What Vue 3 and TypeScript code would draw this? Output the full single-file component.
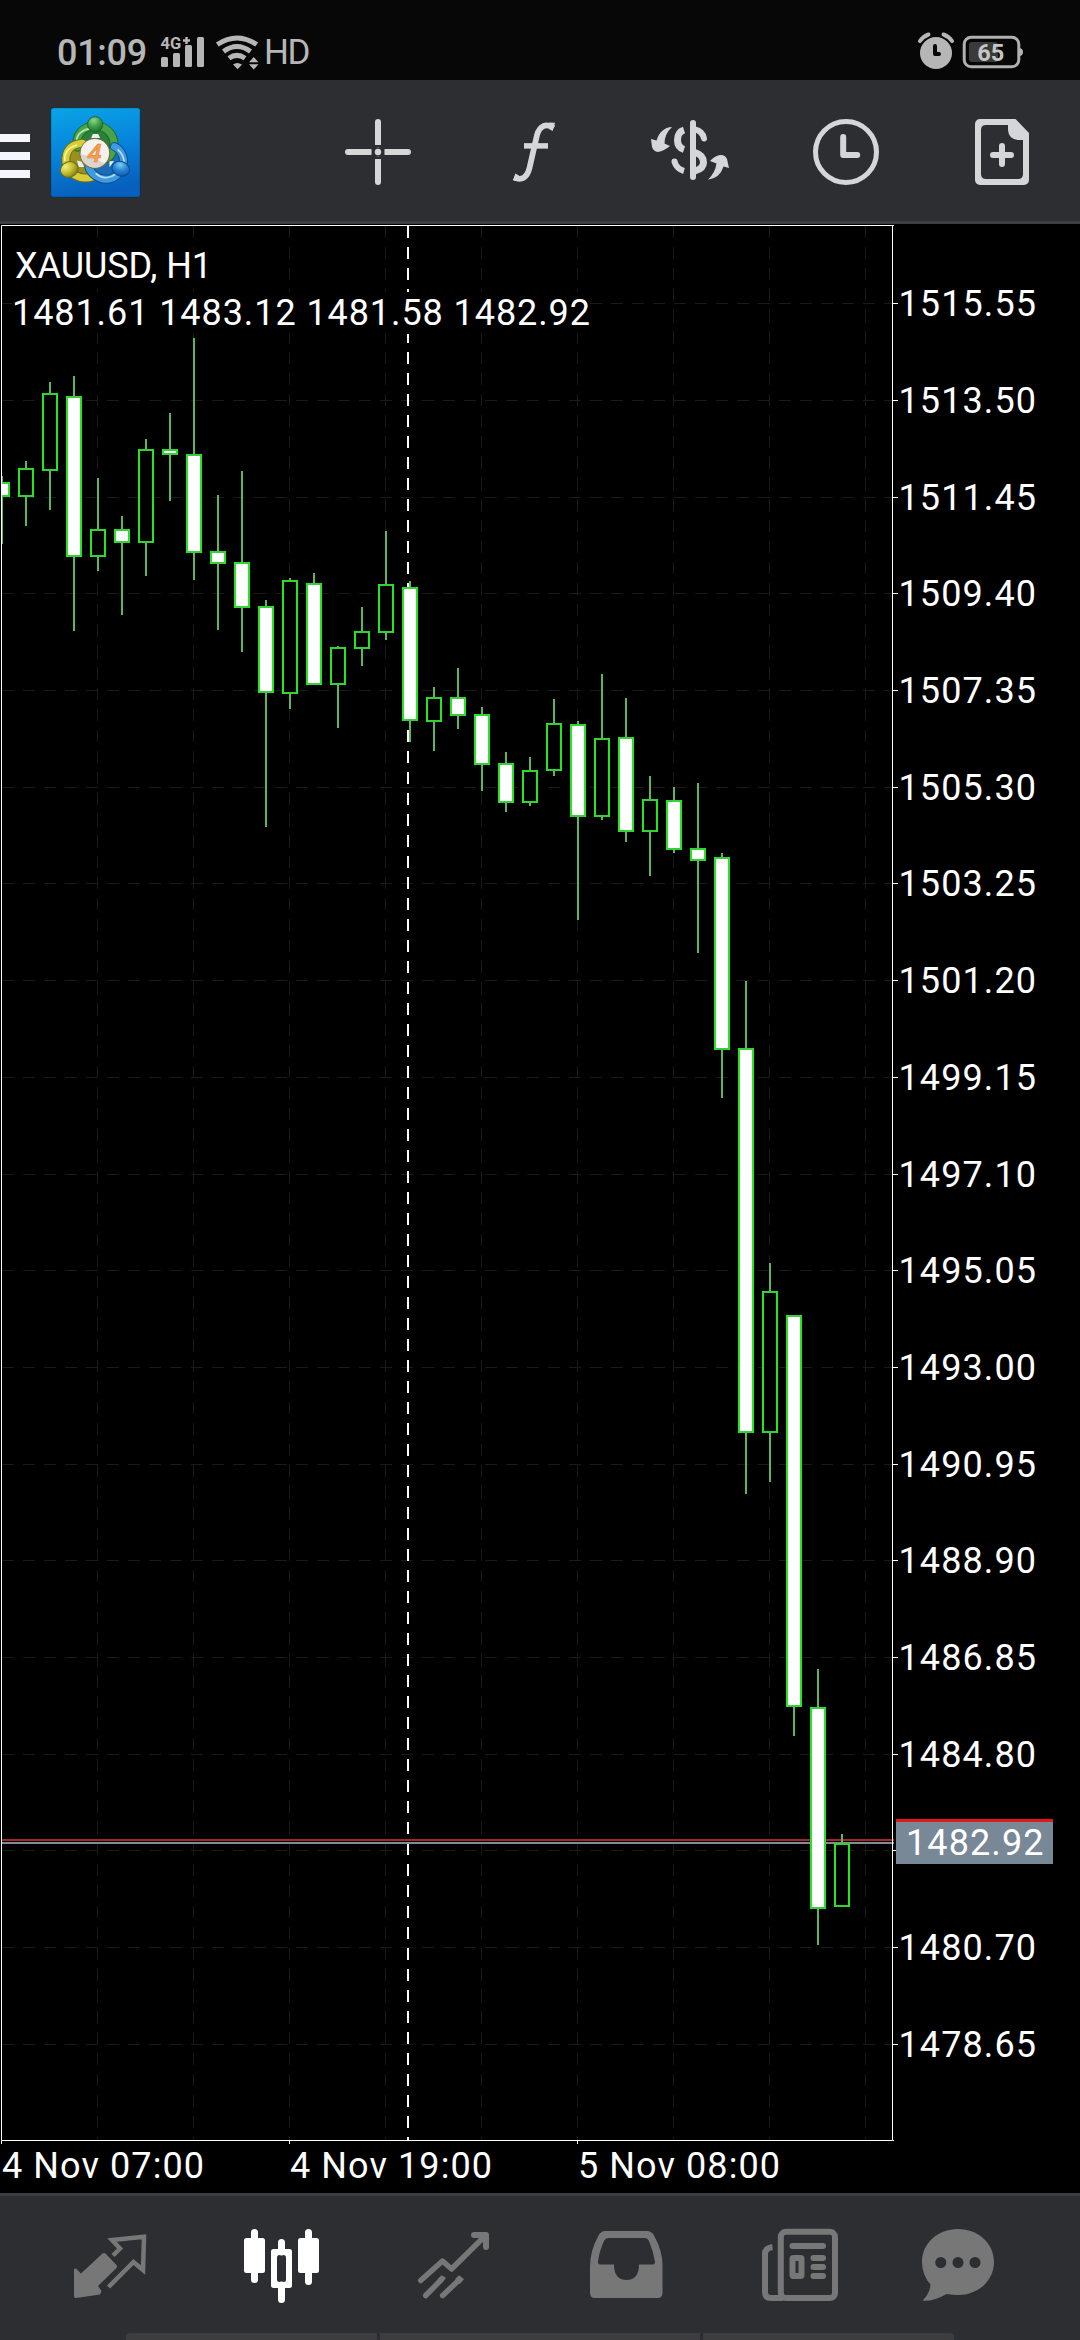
<script setup lang="ts">
interface Candle {
  x: number
  high: number
  top: number
  bottom: number
  low: number
  bear: boolean
}

// high, body top, body bottom, low, bearish flag
const raw: [number, number, number, number, number][] = [
  [476, 482, 497, 544, 1],
  [461, 468, 497, 526, 0],
  [382, 393, 471, 510, 0],
  [376, 396, 557, 631, 1],
  [478, 529, 557, 571, 0],
  [516, 529, 543, 615, 1],
  [439, 449, 543, 576, 0],
  [413, 449, 455, 501, 1],
  [338, 454, 553, 580, 1],
  [495, 551, 564, 630, 1],
  [471, 562, 608, 652, 1],
  [600, 606, 693, 827, 1],
  [578, 580, 694, 709, 0],
  [573, 583, 685, 685, 1],
  [646, 647, 685, 728, 0],
  [607, 631, 649, 666, 0],
  [531, 584, 633, 640, 0],
  [581, 587, 721, 742, 1],
  [687, 697, 722, 751, 0],
  [668, 697, 716, 729, 1],
  [707, 714, 765, 791, 1],
  [752, 763, 803, 812, 1],
  [757, 770, 803, 806, 0],
  [699, 723, 771, 776, 0],
  [721, 724, 817, 920, 1],
  [674, 738, 817, 820, 0],
  [698, 737, 832, 842, 1],
  [776, 799, 832, 876, 0],
  [787, 800, 850, 853, 1],
  [783, 848, 861, 953, 1],
  [853, 857, 1050, 1098, 1],
  [981, 1048, 1433, 1494, 1],
  [1263, 1291, 1433, 1482, 0],
  [1315, 1315, 1707, 1736, 1],
  [1669, 1707, 1909, 1945, 1],
  [1834, 1843, 1907, 1907, 0],
]

const candles: Candle[] = raw.map(([high, top, bottom, low, bear], i) => ({
  x: 2 + i * 24,
  high,
  top,
  bottom,
  low,
  bear: bear === 1,
}))

const gridX: number[] = Array.from({ length: 9 }, (_, i) => 97 + i * 96)
const gridY: number[] = [
  303, 400, 497, 593, 690, 787, 883, 980, 1077, 1174, 1270, 1367, 1464, 1560, 1657, 1754, 1850, 1947, 2044,
]
const prices = gridY
  .map((y, i) => ({ y, label: (1515.55 - i * 2.05).toFixed(2) }))
  .filter((p) => p.y !== 1850)

const dates = [
  { x: 1, label: '4 Nov 07:00' },
  { x: 289, label: '4 Nov 19:00' },
  { x: 577, label: '5 Nov 08:00' },
]
</script>

<template>
  <div class="screen">
    <header class="status">
      <span class="clock">01:09</span>
      <svg class="signal" viewBox="160 34 46 36" width="46" height="36">
        <text x="160.5" y="49" class="net">4G</text>
        <path d="M183 40.5h7M186.500 37v7" class="plus" />
        <path d="M161 58.500a1.500 1.500 0 0 1 1.500-1.500h4a1.500 1.500 0 0 1 1.500 1.500V65.500a1.500 1.500 0 0 1-1.500 1.500h-4a1.500 1.500 0 0 1-1.500-1.500z" />
        <rect x="173" y="53" width="7" height="14" rx="1.500" />
        <rect x="185" y="45" width="7" height="22" rx="1.500" />
        <rect x="197" y="37" width="7" height="30" rx="1.500" />
      </svg>
      <svg class="wifi" viewBox="215 34 45 36" width="45" height="36">
        <path d="M217.300 44.500Q237 31.500 256.700 44.500M223.500 51.500Q237 41.500 250.500 51.500M229 58.300Q237 52.500 245 58.300" />
        <path class="fill" d="M233 64.500Q237 61.500 242 64.500L237.600 69.300z" />
        <path class="fill" d="M249 62.200h9.500L253.700 57zM249 64.200h9.500L253.700 69.500z" />
      </svg>
      <span class="hd">HD</span>
      <svg class="alarm" viewBox="916 31 40 40" width="40" height="40">
        <circle cx="936" cy="53" r="16" />
        <path class="ear" d="M920 41Q923 36.500 928.500 34.500M952 41Q949 36.500 943.500 34.500" />
        <path class="hands" d="M935 46v8h4" />
      </svg>
      <svg class="battery" viewBox="962 34 62 36" width="62" height="36">
        <rect x="964.200" y="37.200" width="54.600" height="29.600" rx="7" class="case" />
        <rect x="969" y="42" width="29" height="20" rx="3" class="charge" />
        <path d="M1020 48q3 1 3 4t-3 4z" class="tip" />
        <text x="990.800" y="60.700" class="level">65</text>
      </svg>
    </header>

    <nav class="toolbar">
      <svg class="burger" viewBox="0 0 30 90" width="30" height="90">
        <path d="M0 25h30v8H0zM0 43h30v8H0zM0 61h30v8H0z" />
      </svg>
      <svg class="logo" viewBox="151 319 274 274" width="91" height="91">
        <defs>
          <linearGradient id="sky" x1="0" y1="0" x2="0.2" y2="1">
            <stop offset="0" stop-color="#0aa5e6" />
            <stop offset="0.500" stop-color="#0785dc" />
            <stop offset="1" stop-color="#0760bd" />
          </linearGradient>
          <radialGradient id="green" cx="0.400" cy="0.250" r="0.800">
            <stop offset="0" stop-color="#8fd58e" />
            <stop offset="0.500" stop-color="#3fa048" />
            <stop offset="1" stop-color="#1a722c" />
          </radialGradient>
          <radialGradient id="yellow" cx="0.350" cy="0.250" r="0.800">
            <stop offset="0" stop-color="#f2ef80" />
            <stop offset="0.500" stop-color="#c9c032" />
            <stop offset="1" stop-color="#807d16" />
          </radialGradient>
          <radialGradient id="blue" cx="0.400" cy="0.250" r="0.800">
            <stop offset="0" stop-color="#7fc9f6" />
            <stop offset="0.500" stop-color="#2885d4" />
            <stop offset="1" stop-color="#0a55a5" />
          </radialGradient>
        </defs>
        <rect x="153" y="321" width="270" height="270" rx="8" fill="url(#sky)" stroke="#13303f" stroke-width="3" />
        <path d="M234 440C226 404 248 378 288 375C330 378 350 415 342 444L322 474L250 470z" fill="#2c7f39" />
        <path d="M248 428C215 430 196 450 199 486C207 520 238 540 278 530L290 480z" fill="#99901f" />
        <path d="M345 438C370 450 380 480 366 506C350 538 315 545 288 526L268 500z" fill="#1c6cb8" />
        <g fill="none" stroke-linecap="round">
          <path d="M234 440C226 404 248 378 288 375C330 378 350 415 342 444C338 458 330 470 322 474" stroke="#1c6a2a" stroke-width="27" />
          <path d="M234 440C226 404 248 378 288 375C330 378 350 415 342 444C338 458 330 470 322 474" stroke="#4ba349" stroke-width="21" />
          <path d="M231 420C232 400 250 386 272 384" stroke="#b9e7aa" stroke-width="5" />
          <path d="M248 428C215 430 196 450 199 486C207 520 238 540 278 530" stroke="#6d6d18" stroke-width="27" />
          <path d="M248 428C215 430 196 450 199 486C207 520 238 540 278 530" stroke="#d8cd38" stroke-width="21" />
          <path d="M230 434C205 442 193 458 196 480" stroke="#f8f59b" stroke-width="5" />
          <path d="M345 438C370 450 380 480 366 506C350 538 315 545 288 526C276 518 270 508 268 500" stroke="#0c4f91" stroke-width="27" />
          <path d="M345 438C370 450 380 480 366 506C350 538 315 545 288 526C276 518 270 508 268 500" stroke="#3f9be0" stroke-width="21" />
          <path d="M290 520C308 535 330 535 348 522M356 448Q372 462 374 482" stroke="#b7e0f8" stroke-width="5" />
        </g>
        <path d="M275 412L280 400H296L302 412zM238 500L232 480L246 484L254 500zM330 500L344 482L330 482z" fill="#e8f2f2" />
        <circle cx="287" cy="371" r="23" fill="url(#green)" stroke="#1b652b" stroke-width="3" />
        <ellipse cx="209" cy="507" rx="27" ry="23" transform="rotate(-20 209 507)" fill="url(#yellow)" stroke="#6a6b1b" stroke-width="3" />
        <ellipse cx="364" cy="505" rx="27" ry="22" transform="rotate(20 364 505)" fill="url(#blue)" stroke="#0d4a8c" stroke-width="3" />
        <circle cx="286" cy="459" r="46" fill="#7d6b34" />
        <circle cx="286" cy="458" r="43" fill="#f2f1ee" />
        <path d="M243 461A43 43 0 0 0 315 490L284 470z" fill="#d9d6d1" />
        <text x="285" y="486" class="four">4</text>
      </svg>

      <div class="tools">
        <svg viewBox="330 104 96 96" class="tool">
          <path class="line" stroke-width="6" d="M348 152h22.500M408 152h-22.500" />
          <path class="line" stroke-width="6" d="M378 122v22.500M378 182v-22.500" />
          <path class="gap" d="M372.800 148v8M383.200 148v8M374 146.300h8M374 157.700h8" />
          <circle cx="378" cy="152" r="3.200" />
        </svg>
        <svg viewBox="486 104 96 96" class="tool">
          <path class="open" stroke-width="5.700" d="M553.600 128C546 122.500 539.500 126 537 135L529.500 168C527 178 521.500 180.800 514 177.500" />
          <path class="open" stroke-width="5.500" d="M524 145.900h24" />
          <path d="M555 122.800L552.700 131L549 129V122.500zM513.200 180.500L515.300 173.500L519 175.500V181z" />
        </svg>
        <svg viewBox="642 104 96 96" class="tool">
          <path class="line" stroke-width="6" d="M693 123v54" />
          <path class="open" stroke-width="7" d="M684 130Q677.500 132 677.500 140Q677.500 147.500 684 149.500" />
          <path class="line" stroke-width="6" d="M695 129.500Q702.500 131 704 138.500" />
          <path class="open" stroke-width="7" d="M695 152.500Q703.500 155 703.500 162.500Q703.500 168.500 695 171" />
          <path class="open" stroke-width="6" d="M674.500 162Q677 169 684 171" />
          <circle cx="674.500" cy="161.500" r="3" />
          <path d="M672 127Q660.500 127.500 656.500 140.500L651 139L652 147Q653.500 151.500 658 152Q664 151 670 146L664.500 143.500Q664.500 134 672 127z" />
          <path d="M708 179.800Q720 178 723.500 166.500L729 168L727 159Q725 154.500 720 155Q714.500 156 710 161L716.500 163.500Q715.500 172 708 179.800z" />
        </svg>
        <svg viewBox="798 104 96 96" class="tool">
          <circle cx="846" cy="152" r="30.500" fill="none" stroke="#d5d6d8" stroke-width="5" />
          <path class="line" stroke-width="6" d="M843.200 137v18h14" />
        </svg>
        <svg viewBox="954 104 96 96" class="tool">
          <path fill-rule="evenodd" d="M980 119h35.500L1029 133v47a5 5 0 0 1-5 5h-44a5 5 0 0 1-5-5v-56a5 5 0 0 1 5-5zM986 125q-5 0-5 5v44q0 5 5 5h32q5 0 5-5v-34h-5q-9.500-1-10-10v-5z" />
          <path class="line" stroke-width="6" d="M1002 146v18M993 155h18" />
        </svg>
      </div>
    </nav>

    <main class="chart">
      <svg viewBox="0 224 1080 1969" width="1080" height="1969">
        <defs>
          <clipPath id="plot"><rect x="2" y="226" width="890" height="1914" /></clipPath>
        </defs>
        <g class="grid">
          <path v-for="y in gridY" :key="'h' + y" :d="`M2 ${y + 0.5}H892`" />
          <path v-for="x in gridX" :key="'v' + x" :d="`M${x + 0.5} 226V2140`" />
        </g>
        <path d="M408 226V2140" class="session" />
        <path d="M2 1840H894" stroke="#a62626" stroke-width="2" />
        <path d="M2 1843H894" stroke="#838a9b" stroke-width="2" />
        <g clip-path="url(#plot)">
          <g v-for="c in candles" :key="c.x">
            <path class="wick" :d="`M${c.x} ${c.high}V${c.low}`" />
            <rect
              :class="['body', { bear: c.bear }]"
              :x="c.x - 7"
              :y="c.top + 1"
              width="14"
              :height="c.bottom - c.top - 2"
            />
            <path class="cap" :d="`M${c.x - 6} ${c.top + 1}h12M${c.x - 6} ${c.bottom - 1}h12`" />
          </g>
        </g>
        <rect x="14" y="249" width="196" height="40" />
        <rect x="12" y="292" width="578" height="42" />
        <path class="frame" d="M1.500 2144V225.500H894M892.500 225V2140.500H1M289.500 2141v3M577.500 2141v3M893 2140.500h1" />
        <path v-for="y in gridY" :key="'t' + y" class="frame" :d="`M893 ${y + 0.5}h5`" />

        <text x="15" y="278" class="label" textLength="197">XAUUSD, H1</text>
        <text x="12" y="325" class="label" textLength="578">1481.61 1483.12 1481.58 1482.92</text>
        <text v-for="p in prices" :key="p.label" x="898.500" :y="p.y + 13" class="label" textLength="137.500">{{ p.label }}</text>
        <rect x="896" y="1819" width="157" height="45" class="tag" />
        <rect x="896" y="1819" width="157" height="3" class="tagline" />
        <text x="906" y="1855" class="label" textLength="137.500">1482.92</text>
        <text v-for="d in dates" :key="d.label" :x="d.x + 1" y="2178" class="label" textLength="202">{{ d.label }}</text>
      </svg>
    </main>

    <footer class="bottom">
      <div class="tabs">
        <svg viewBox="50 2199 120 134" class="tab">
          <path d="M102.500 2253.500q1.500-1.200 3 0l11 11.500q1 1.500 0 3L98 2286l3.500 5-1.500 3.500L76 2298q-2 0-2-2V2269l2-.5 5 5z" />
          <path class="open" stroke-width="4.500" d="M113 2255.500L120 2248.500L112 2240L144 2236.700L143 2270L133.500 2262L108.500 2287" />
        </svg>
        <svg viewBox="222 2199 120 134" class="tab active">
          <path class="line" stroke-width="7" d="M254.500 2232.500V2279.500M308.500 2232.500V2281.500M281.500 2242.500V2252M281.500 2285V2299.500" />
          <rect x="244" y="2238" width="21" height="35" rx="2.500" />
          <rect x="298" y="2238" width="21" height="35" rx="2.500" />
          <path fill-rule="evenodd" d="M273.500 2249h16q2.500 0 2.500 2.500v34q0 2.500-2.500 2.500h-16q-2.500 0-2.500-2.500v-34q0-2.500 2.500-2.500zM279.500 2255q-2.500 0-2.500 2.500v22q0 2.500 2.500 2.500h4q2.500 0 2.500-2.500v-22q0-2.500-2.500-2.500z" />
        </svg>
        <svg viewBox="394 2199 120 134" class="tab">
          <path class="line" stroke-width="5.500" d="M420.700 2280.500L442.500 2261L451.500 2269L485 2236" />
          <path class="line" stroke-width="6" d="M474 2235h12v12" />
          <path class="line" stroke-width="5.500" d="M425.700 2295.500L440 2281M442.700 2295.500L458 2281" />
          <path d="M437.500 2279l4-3.800 4.500 2.500-3.500 5zM455 2279l4-3.800 5 3.800-4 5z" />
        </svg>
        <svg viewBox="566 2199 120 134" class="tab">
          <path fill-rule="evenodd" d="M605 2231h42q5 0 7.500 5.500Q663 2252 662.500 2267V2293q0 5-5 5H595q-5 0-5-5V2267Q590 2251 598 2236.500q2.500-5.500 7-5.500zM608 2238q-2.500 0-4 3Q599 2252 598 2262q0 2.500 2 2.500h14q0 15.500 12.500 15.500T639 2264.500h14q2 0 2-2.500Q653.500 2252 649 2241q-1.500-3-4-3z" />
        </svg>
        <svg viewBox="738 2199 120 134" class="tab">
          <rect x="780.800" y="2231.800" width="54.200" height="66.200" rx="5" class="box" />
          <path class="open" stroke-width="6" d="M772.500 2247Q765 2248 765 2254V2292Q765 2298 771 2298H783" />
          <path class="line" stroke-width="6" d="M792.500 2246h30.500M813.500 2258h9.500M813.500 2267h9.500M813.500 2276h9.500" />
          <rect x="792.500" y="2258" width="9" height="18" rx="1" class="box" />
        </svg>
        <svg viewBox="910 2199 120 134" class="tab">
          <path fill-rule="evenodd" d="M958 2229C978 2229 994 2243 994 2262C994 2281 978 2295 958 2295Q952 2295 946.500 2294Q934 2301.500 922.500 2300.800Q930 2293 930.500 2284.500Q922 2275 922 2262C922 2243 938 2229 958 2229zM935.300 2262.500a5.500 5.500 0 1 0 11 0a5.500 5.500 0 1 0-11 0zM952.500 2262.500a5.500 5.500 0 1 0 11 0a5.500 5.500 0 1 0-11 0zM969.500 2262.500a5.500 5.500 0 1 0 11 0a5.500 5.500 0 1 0-11 0z" />
        </svg>
      </div>
      <div class="windows">
        <i class="first"></i>
        <i class="middle"></i>
        <i class="last"></i>
      </div>
    </footer>
  </div>
</template>

<style>
body {
  background: #000;
}
</style>

<style scoped>
.screen {
  width: 1080px;
  height: 2340px;
  display: flex;
  flex-direction: column;
  overflow: hidden;
  background: #000;
  font-family: Roboto, "Liberation Sans", sans-serif;
}
svg {
  display: block;
  flex: none;
}
.status {
  box-sizing: border-box;
  height: 80px;
  flex: none;
  display: flex;
  align-items: flex-start;
  padding-left: 57px;
  padding-right: 56px;
  background: #070707;
  color: #b6b6b6;
  fill: #b6b6b6;
}
.clock,
.hd {
  font-size: 36px;
  line-height: 42px;
  margin-top: 32px;
  white-space: nowrap;
}
.clock {
  width: 103px;
  font-weight: 500;
  letter-spacing: -0.3px;
}
.hd {
  font-size: 35px;
  margin-left: 4px;
  letter-spacing: -1.5px;
}
.signal,
.battery {
  margin-top: 34px;
}
.wifi {
  margin: 34px 0 0 9px;
}
.wifi path {
  fill: none;
  stroke: #b6b6b6;
  stroke-width: 5;
}
.wifi .fill {
  fill: #b6b6b6;
  stroke: none;
}
.net {
  font-size: 16.500px;
  font-weight: 700;
}
.plus {
  stroke: #b6b6b6;
  stroke-width: 2.500;
}
.alarm {
  margin: 31px 6px 0 auto;
}
.ear {
  fill: none;
  stroke: #b6b6b6;
  stroke-width: 4;
  stroke-linecap: round;
}
.hands {
  fill: none;
  stroke: #070707;
  stroke-width: 4;
  stroke-linecap: round;
  stroke-linejoin: round;
}
.case {
  fill: none;
  stroke: #b0b0b0;
  stroke-width: 3;
}
.charge {
  fill: #3a3a3a;
}
.level {
  font-size: 23.500px;
  font-weight: 700;
  text-anchor: middle;
  fill: #c6c6c6;
}
.toolbar {
  box-sizing: border-box;
  height: 144px;
  flex: none;
  display: flex;
  align-items: center;
  padding-top: 3px;
  background: #2d2e31;
  border-bottom: 3px solid #3d3d3f;
}
.burger {
  fill: #f3f6ff;
  margin-top: 4px;
}
.logo {
  margin-left: 20px;
}
.four {
  font-family: "Open Sans", sans-serif;
  font-size: 74px;
  font-style: italic;
  font-weight: 600;
  text-anchor: middle;
  fill: #f6a257;
  stroke: #e8802d;
  stroke-width: 2;
}
.tools {
  display: flex;
  margin-left: auto;
  width: 780px;
}
.tool {
  width: 96px;
  height: 96px;
  margin: 0 30px;
  fill: #d5d6d8;
}
.line,
.open {
  fill: none;
  stroke: #d5d6d8;
}
.line {
  stroke-linecap: round;
  stroke-linejoin: round;
}
.gap {
  stroke: #2d2e31;
  stroke-width: 2.500;
}
.chart {
  height: 1969px;
  flex: none;
}
.grid {
  stroke: #1a1a1a;
  stroke-width: 1;
  stroke-dasharray: 12 9;
}
.session {
  stroke: #fff;
  stroke-width: 2;
  stroke-dasharray: 12 9;
}
.wick {
  stroke: #5cb75c;
  stroke-width: 2;
}
.body {
  fill: #000;
  stroke: #1fe81f;
  stroke-width: 2;
}
.body.bear {
  fill: #fff;
}
.cap {
  stroke: #35d035;
  stroke-width: 2;
}
.frame {
  fill: none;
  stroke: #fff;
  stroke-width: 1;
}
.label {
  font-size: 36px;
  fill: #fff;
}
.tag {
  fill: #788897;
}
.tagline {
  fill: #e41818;
}
.bottom {
  box-sizing: border-box;
  height: 147px;
  flex: none;
  display: flex;
  flex-direction: column;
  background: #2d2e31;
  border-top: 3px solid #3d3d3f;
}
.tabs {
  display: flex;
  height: 137px;
  padding-left: 24px;
}
.tab {
  width: 120px;
  height: 134px;
  margin: 3px 26px 0;
  fill: #777;
}
.tab .line,
.tab .open,
.box {
  stroke: #777;
}
.box {
  fill: none;
  stroke-width: 6;
}
.tab.active {
  fill: #fff;
}
.tab.active .line {
  stroke: #fff;
}
.windows {
  display: flex;
  gap: 3px;
  height: 7px;
  padding-left: 126px;
}
.windows i {
  background: #3d3d3f;
}
.first {
  width: 251px;
  border-top-left-radius: 4px;
}
.middle {
  width: 320px;
}
.last {
  width: 251px;
  border-top-right-radius: 4px;
}
</style>
